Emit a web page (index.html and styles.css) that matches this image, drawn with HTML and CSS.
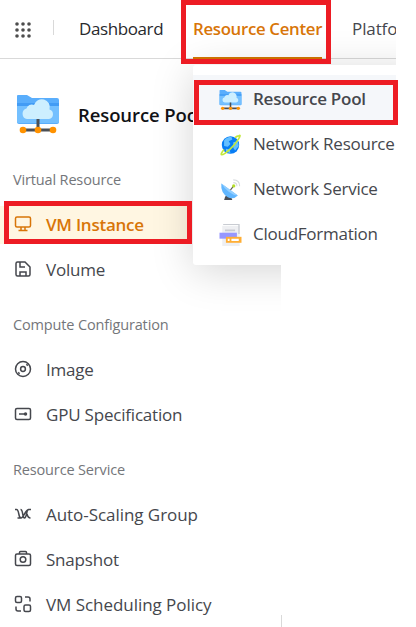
FILE: index.html
```html
<!DOCTYPE html>
<html lang="en">
<head>
<meta charset="utf-8">
<title>Resource Pool</title>
<link rel="stylesheet" href="styles.css">
</head>
<body>
<svg class="defs" width="0" height="0">
  <symbol id="folder" viewBox="0 0 44 40">
    <path fill="#5aaefc" d="M2 1h9l5 3h25q2 0 2 2v22q0 2-2 2H3q-2 0-2-2V2q0-1 1-1z"/>
    <path fill="#74c0ff" d="M1 12h42v16q0 1-2 1H3q-2 0-2-1z"/>
    <path fill="#429cf5" d="M1 9h42v3H1z"/>
    <path fill="#cdefff" d="M11 25a5.4 5.4 0 0 1-.5-10.500A5.500 5.500 0 0 1 18 11a8 8 0 0 1 15.500 4.500A4.900 4.900 0 0 1 33 25z"/>
    <path fill="#4b4f55" d="M20.500 25h3v11h-3z"/><path fill="#4b4f55" d="M8 34.500h28v3H8z"/>
    <g fill="#ff9200"><circle cx="7" cy="36" r="3.300"/><circle cx="22" cy="36" r="3.300"/><circle cx="37" cy="36" r="3.300"/></g>
  </symbol>
</svg>
<div class="app">
  <header class="topbar">
    <svg class="apps" viewBox="0 0 16 16" fill="#4d4d4d"><circle cx="2" cy="2" r="1.800"/><circle cx="8" cy="2" r="1.800"/><circle cx="14" cy="2" r="1.800"/><circle cx="2" cy="8" r="1.800"/><circle cx="8" cy="8" r="1.800"/><circle cx="14" cy="8" r="1.800"/><circle cx="2" cy="14" r="1.800"/><circle cx="8" cy="14" r="1.800"/><circle cx="14" cy="14" r="1.800"/></svg>
    <span class="divider"></span>
    <a class="tab dashboard"><span>Dashboard</span></a>
    <a class="tab active"><span>Resource Center</span></a>
    <a class="tab platform"><span>Platfo</span></a>
  </header>
  <aside class="sidebar">
    <div class="title"><svg><use href="#folder"/></svg><h1>Resource Pool</h1></div>
    <h2 class="first"><span>Virtual Resource</span></h2>
    <a class="item selected"><svg viewBox="0 0 18 18"><rect x="1.500" y="2" width="15" height="10" rx="1.500"/><path d="M7 12v3m4-3v3M4.500 15.500h9"/></svg><span>VM Instance</span></a>
    <a class="item"><svg viewBox="0 0 18 18"><path d="M3.500 2H11l5 5v7.500q0 1.500-1.500 1.500h-11Q2 16 2 14.500v-11Q2 2 3.500 2zM6 2v5h5M6 16v-4h6v4"/></svg><span>Volume</span></a>
    <h2><span>Compute Configuration</span></h2>
    <a class="item"><svg viewBox="0 0 18 18"><circle cx="9" cy="9" r="7.500"/><circle cx="9" cy="9" r="2.400"/><path d="M4.300 12.200l1.200 1.700M12.500 4.100l1.200 1.700"/></svg><span>Image</span></a>
    <a class="item"><svg viewBox="0 0 18 18"><rect x="1.500" y="3.500" width="15" height="11" rx="1.500"/><path d="M5 9h6"/><circle class="solid" cx="11.500" cy="9" r="1"/></svg><span>GPU Specification</span></a>
    <h2><span>Resource Service</span></h2>
    <a class="item"><svg viewBox="0 0 18 18"><path d="M1 4.500h1.500C5.500 4.500 4 13 7 13s4-8.500 8-8.500h2M6.500 4.500C9.500 4.500 8 13 10.500 13S12 5 14.500 4.500M13 9c.5 2 1 4 3.500 4M3.500 13H7"/></svg><span class="wide">Auto-Scaling Group</span></a>
    <a class="item"><svg viewBox="0 0 18 18"><rect x="1.500" y="4" width="15" height="11.500" rx="1.500"/><path d="M5.500 4V2.500Q5.500 1.500 6.500 1.500h5q1 0 1 1V4"/><circle cx="9" cy="9.500" r="2.800"/></svg><span>Snapshot</span></a>
    <a class="item"><svg viewBox="0 0 18 18"><rect x="1.500" y="1.500" width="6" height="6" rx="1.500"/><rect x="10" y="10" width="6.500" height="6.500" rx="1.500"/><path d="M11 2h3q2 0 2 2v2.500M2 11.500v2.500q0 2 2 2h3"/></svg><span class="wide">VM Scheduling Policy</span></a>
  </aside>
  <div class="edge"></div>
  <div class="overlay">
    <nav class="menu">
      <a class="current"><svg viewBox="0 0 44 40"><use href="#folder"/></svg><span>Resource Pool</span></a>
      <a><svg viewBox="0 0 24 24"><circle cx="12" cy="12" r="9.500" fill="#087df5"/><path fill="#64bfff" d="M5 7q3-4 8-4l1 3-4 2 2 3-3 3-4-1zM15 9l5-1 1 5-4 5-2-3zM7 16l4 1 1 4-5-2z"/><path d="M5 17C-1 24 2 25 11 17S25-1 21 2q-2 0-4 2" fill="none" stroke="#c3e83a" stroke-width="1.800"/></svg><span>Network Resource</span></a>
      <a><svg viewBox="0 0 24 24"><path fill="#494e57" d="M7 18h5l2 5H5l1-3z"/><path fill="#60b6ff" d="M2 5l18 13q-5 5-11 2Q1 15 2 5z"/><path fill="#92ceff" d="M2 5l18 13q-5 0-10-4T2 5z"/><path d="M12 12l3-4" stroke="#555" stroke-width="1.300"/><circle cx="15.500" cy="7.500" r="1.800" fill="#b5dd28"/><path d="M15 4q4 0 4 4M15 1q7 0 7 7" fill="none" stroke="#d7dadd" stroke-width="1.200"/></svg><span>Network Service</span></a>
      <a><svg viewBox="0 0 24 24"><path fill="#eeeff2" d="M3 2h19v22H3z"/><path fill="#c9ccd2" d="M4 0h18v11h-1.500V1H4zM6 6h11v2H6z"/><path fill="#9697ff" d="M0 9.500h19v6.500H0z"/><path fill="#ffae35" d="M7 14h17v6.500H7z"/><path fill="#fff" d="M9 16h2v2.500H9zM13 16h8v2.500h-8z"/></svg><span>CloudFormation</span></a>
    </nav>
  </div>
  <div class="mark mark-tab"></div><div class="mark mark-menu"></div><div class="mark mark-side"></div>
</div>
</body>
</html>
```
FILE: styles.css
```css
* { box-sizing: border-box; }
body { margin: 0; background: #fff; font-family: "Open Sans", "Noto Sans", sans-serif; font-size: 17px; letter-spacing: -.2px; color: #45474d; }
.defs { position: absolute; }
.app { position: relative; width: 416px; height: 627px; overflow: hidden; }
span { white-space: nowrap; }
.topbar { display: flex; align-items: center; width: 396px; height: 59px; box-shadow: inset 0 -1px #d9d9d9; overflow: hidden; }
.apps { width: 16px; height: 16px; margin-left: 15px; flex: none; }
.divider { width: 1px; height: 15px; margin: 0 25px 4px 22px; background: #d9d9d9; flex: none; }
.tab { display: flex; align-items: center; height: 59px; flex: none; padding-bottom: 2px; }
.dashboard { width: 114px; color: #28292d; letter-spacing: -.4px; }
.active { width: 129px; margin-right: 30px; color: #d87508; font-weight: 600; font-size: 16.8px; letter-spacing: -.3px; border-bottom: 2px solid #d47500; padding-bottom: 0; }
.platform { letter-spacing: -.1px; }
.sidebar { width: 281px; height: 568px; overflow: hidden; }
.title { display: flex; align-items: center; height: 98px; padding: 12px 0 0 16px; }
.title svg { width: 44px; height: 40px; margin-right: 18px; flex: none; }
h1 { margin: 0; font-size: 18.5px; font-weight: 600; letter-spacing: -.1px; color: #111216; white-space: nowrap; }
h2 { display: flex; align-items: center; height: 55px; margin: 0 0 0 13px; padding-top: 10px; font-size: 14.5px; font-weight: 400; letter-spacing: -.15px; color: #74767a; }
.first { height: 45px; padding-top: 0; }
.item { display: flex; align-items: center; height: 45px; padding-left: 14px; }
.item svg { width: 18px; height: 18px; margin: -1px 14px 0 0; fill: none; stroke: #45474d; stroke-width: 1.5; flex: none; }
.item .solid { fill: #45474d; }
.wide { letter-spacing: -.05px; }
.selected { color: #d87508; font-weight: 600; background: linear-gradient(#fff6e2, #fff6e2) 0 4px / 192px 38px no-repeat; }
.selected span { letter-spacing: -.25px; }
.item.selected svg { stroke: #d87508; }
.edge { position: absolute; left: 281px; top: 615px; width: 1px; height: 12px; background: #d9d9d9; }
.overlay { position: absolute; inset: 0; overflow: hidden; clip-path: polygon(0 0, 396px 0, 396px 265px, 281px 265px, 281px 100%, 0 100%); }
.menu { position: absolute; left: 193px; top: 65px; width: 240px; height: 200px; padding-top: 10px; border-radius: 3px; background: #fff; box-shadow: 0 6px 42px rgba(0,0,0,.17); }
.menu a { display: flex; align-items: center; height: 45px; padding: 2px 0 0 26px; }
.menu a span { letter-spacing: -.25px; }
.menu svg { width: 23px; height: 22px; margin-right: 11px; margin-top: 3px; }
.menu .current { background: #f5f7fa; font-weight: 600; }
.mark { position: absolute; border: 5px solid #ed1c24; }
.mark-tab { left: 181px; top: 0; width: 150px; height: 64px; }
.mark-menu { left: 194px; top: 80px; width: 204px; height: 45px; }
.mark-side { left: 4px; top: 201px; width: 188px; height: 43px; }
```
